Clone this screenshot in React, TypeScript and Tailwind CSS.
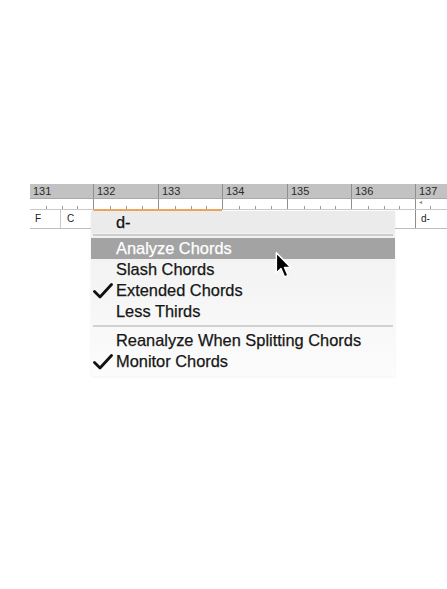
import React from "react";

const measures = [
  { n: 131, w: 63 },
  { n: 132, w: 65 },
  { n: 133, w: 64 },
  { n: 134, w: 65 },
  { n: 135, w: 64 },
  { n: 136, w: 64 },
  { n: 137, w: 32 },
];

const items = [
  { label: "Analyze Chords", active: true },
  { label: "Slash Chords" },
  { label: "Extended Chords", checked: true },
  { label: "Less Thirds" },
];

function Check() {
  return (
    <svg width="20" height="16" viewBox="0 0 20 16" className="absolute left-[2px] top-[3px]">
      <path d="M1.5 8.5 L7 14 L18.5 1.5" fill="none" stroke="#111" strokeWidth="2.8" strokeLinecap="round" strokeLinejoin="round" />
    </svg>
  );
}

function MenuRow({ label, active, checked }: { label: string; active?: boolean; checked?: boolean }) {
  return (
    <div
      className={`relative h-[21px] pl-[25px] leading-[21px] text-[16.4px] [-webkit-text-stroke:0.25px_currentColor] ${
        active ? "bg-[#a3a3a3] text-white" : "text-[#161616]"
      }`}
    >
      {checked && <Check />}
      {label}
    </div>
  );
}

export default function App() {
  return (
    <div className="w-[447px] h-[589px] bg-white overflow-hidden" style={{ fontFamily: '"Liberation Sans", Arial, sans-serif' }}>
      <div className="relative pt-[184px] pl-[30px]">
        {/* ruler: bar numbers */}
        <div className="flex h-[15px] bg-[#c2c2c2] border-b border-[#a9a9a9]">
          {measures.map((m, i) => (
            <div
              key={m.n}
              className={`shrink-0 text-[11px] leading-[15px] text-[#2a2a2a] pl-[3px] ${i > 0 ? "border-l border-[#8e8e8e]" : ""}`}
              style={{ width: m.w }}
            >
              {m.n}
            </div>
          ))}
        </div>
        {/* ruler: beat ticks */}
        <div className="flex h-[11px] bg-white border-b border-[#c9c9c9]">
          {measures.map((m, i) => (
            <div
              key={m.n}
              className={`relative shrink-0 ${i > 0 ? "border-l border-[#8e8e8e]" : ""}`}
              style={{ width: m.w }}
            >
              {i < 6 && (
                <>
                  <div className="absolute bottom-0 left-1/4 w-px h-[3px] bg-[#9a9a9a]" />
                  <div className="absolute bottom-0 left-1/2 w-px h-[3px] bg-[#9a9a9a]" />
                  <div className="absolute bottom-0 left-3/4 w-px h-[3px] bg-[#9a9a9a]" />
                </>
              )}
              {i === 6 && (
                <>
                  <span className="absolute left-[3px] top-[-1px] text-[6px] text-[#888]">◂</span>
                  <div className="absolute bottom-0 left-[14px] w-px h-[3px] bg-[#9a9a9a]" />
                </>
              )}
            </div>
          ))}
        </div>
        {/* chord row */}
        <div className="flex h-[19px] bg-white border-b border-[#bdbdbd] text-[10px] leading-[18px] text-[#222]">
          <div className="w-[31px] shrink-0 pl-[5px] border-r border-[#c9c9c9]">F</div>
          <div className="w-[32px] shrink-0 pl-[6px]">C</div>
          <div className="w-[129px] shrink-0 border-l border-[#c9c9c9] border-t-2 border-t-[#eda45c] -mt-px" />
          <div className="w-[193px] shrink-0" />
          <div className="flex-1 pl-[5px] border-l border-[#8e8e8e]">d-</div>
        </div>

        {/* popup menu */}
        <div className="absolute left-[91px] top-[211px] w-[304px] bg-gradient-to-b from-[#efefef] to-[#fcfcfc] shadow-[0_1px_3px_rgba(0,0,0,0.06)] pb-[4px]">
          <div className="h-[22px] bg-[#ebebeb] pl-[25px] text-[16.4px] leading-[22px] text-[#111] [-webkit-text-stroke:0.25px_currentColor]">d-</div>
          <div className="mx-[2px] mt-[1px] mb-[2px] h-[2px] bg-[#cdcdcd]" />
          {items.map((it) => (
            <MenuRow key={it.label} {...it} />
          ))}
          <div className="mx-[2px] my-[3px] h-[2px] bg-[#d2d2d2]" />
          <MenuRow label="Reanalyze When Splitting Chords" />
          <MenuRow label="Monitor Chords" checked />
        </div>

        {/* mouse cursor */}
        <svg className="absolute left-[274px] top-[251px]" width="22" height="30" viewBox="0 0 18 26">
          <path d="M1.5 1.5 L1.5 19 L5.5 15.2 L8.6 22.5 L11.6 21.2 L8.6 14.2 L14 14.2 Z" fill="#000" stroke="#fff" strokeWidth="1.3" strokeLinejoin="round" />
        </svg>
      </div>
    </div>
  );
}
